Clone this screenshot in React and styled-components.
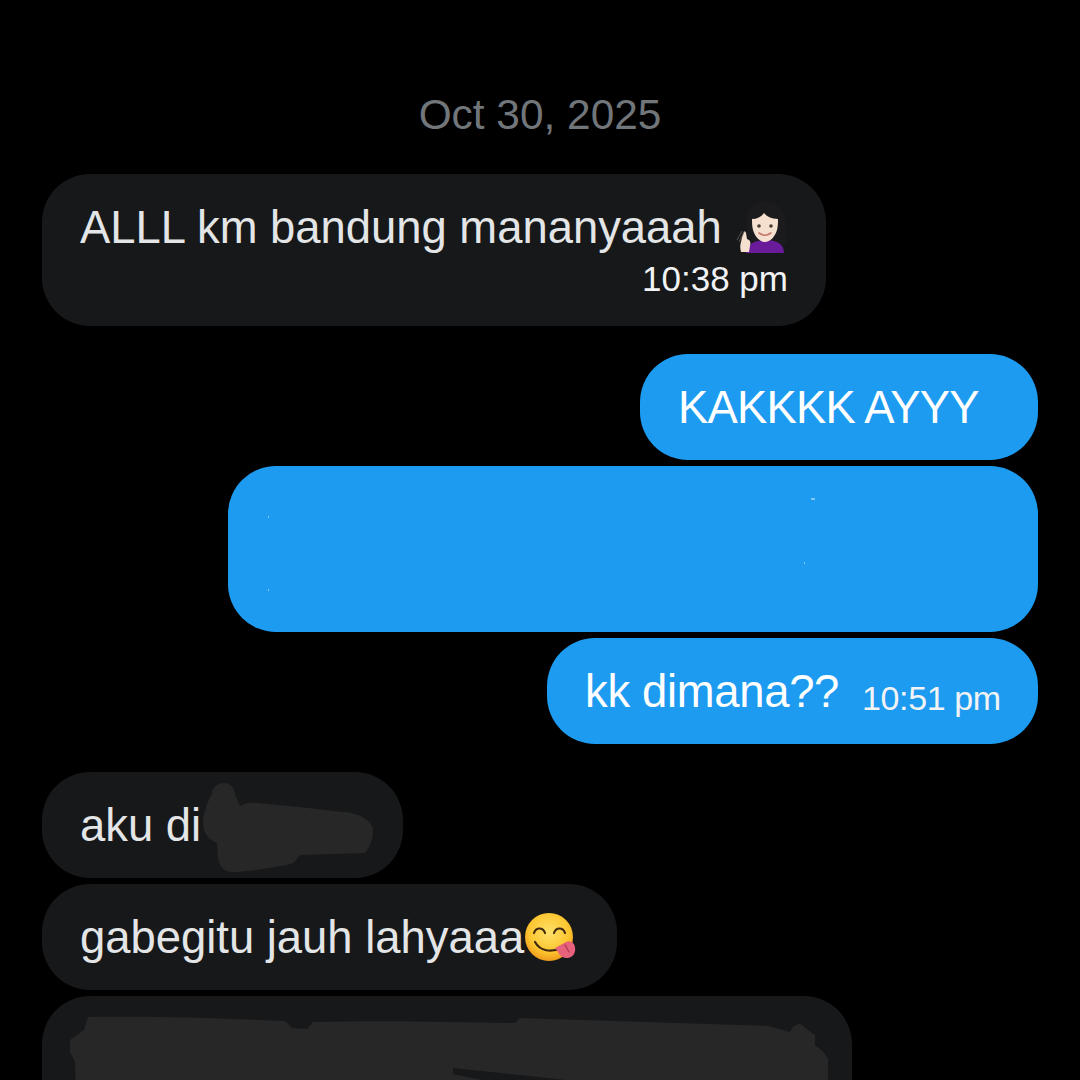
import React from "react";
import styled, { createGlobalStyle } from "styled-components";

const Global = createGlobalStyle`
  html, body { margin: 0; padding: 0; background: #000; }
  #root { width: 1080px; height: 1080px; overflow: hidden; }
`;

const Page = styled.main`
  width: 1080px;
  height: 1080px;
  box-sizing: border-box;
  padding: 0 42px;
  background: #000;
  overflow: hidden;
  display: flex;
  flex-direction: column;
  font-family: "Liberation Sans", Arial, sans-serif;
`;

const DateLabel = styled.div`
  height: 174px;
  box-sizing: border-box;
  padding-top: 91px;
  text-align: center;
  font-size: 42.4px;
  line-height: 48px;
  color: #71767b;
  flex: none;
`;

const Group = styled.section`
  display: flex;
  flex-direction: column;
  align-items: ${(p) => (p.$mine ? "flex-end" : "flex-start")};
  gap: 6px;
  margin-bottom: 28px;
  flex: none;
`;

const Bubble = styled.div`
  position: relative;
  box-sizing: border-box;
  width: ${(p) => p.$w}px;
  height: ${(p) => p.$h}px;
  padding: 25px 38px 0;
  border-radius: 48px;
  background: ${(p) => (p.$mine ? "#1d9bf0" : "#16181a")};
  color: ${(p) => (p.$mine ? "#ffffff" : "#e3e5e6")};
  font-size: 45.4px;
  line-height: 58px;
  white-space: nowrap;
  flex: none;
`;

const Line = styled.div`
  display: flex;
  align-items: center;
  height: 58px;
  letter-spacing: ${(p) => p.$ls || 0}px;
`;

const Stamp = styled.div`
  font-size: 35px;
  line-height: 40px;
  color: #f2f3f4;
  text-align: right;
  margin-top: 2px;
`;

const InlineStamp = styled.span`
  font-size: 34px;
  letter-spacing: -0.4px;
  color: #f2f3f4;
  margin-left: 23px;
  position: relative;
  top: 6px;
`;

const Smudge = styled.svg`
  position: absolute;
  left: 0;
  top: 0;
  pointer-events: none;
`;

const Emoji = styled.svg`
  flex: none;
  margin-left: ${(p) => p.$ml || 0}px;
  margin-right: -20px;
`;

const Woman = () => (
  <Emoji width="60" height="60" viewBox="0 0 60 60" $ml={10}>
    <path d="M14 26C13 11 22 4 34 4c12 0 21 8 20 24-.3 6 0 12 1 18H13c1-6 1.500-13 1-20z" fill="#1b1a1c" />
    <path d="M14 55c1-8 8-13 20-13s18 5 18 13z" fill="#6a1b9a" />
    <path d="M20 21c5 0 9-2 12-6 2 3 8 6 14 6 0 4 0 7-1 11-2 7-7 12-12 12s-10-5-12-12c-1-4-1-7-1-11z" fill="#f5dfcf" />
    <circle cx="27" cy="28" r="1.800" fill="#4a3a33" />
    <circle cx="39" cy="28" r="1.800" fill="#4a3a33" />
    <path d="M27 35c4 3 8 3 12 0" stroke="#c8786b" strokeWidth="1.600" fill="none" strokeLinecap="round" />
    <path d="M9 54c-1-4-1-7 0-10l2-9c.3-2 3-2 3 0l1 6c3 1 4 3 3 7l-1 6z" fill="#f5dfcf" />
    <path d="M5 42l5-9M7 44l5-10" stroke="#55504e" strokeWidth="1" />
  </Emoji>
);

const Yum = () => (
  <Emoji width="52" height="52" viewBox="0 0 52 52">
    <defs>
      <radialGradient id="face" cx="50%" cy="40%" r="60%">
        <stop offset="0" stopColor="#ffe169" />
        <stop offset="0.7" stopColor="#fcc52f" />
        <stop offset="1" stopColor="#ef9a1c" />
      </radialGradient>
    </defs>
    <circle cx="25" cy="25" r="24" fill="url(#face)" />
    <path d="M10 21c2-6 9-6 11 0M30 21c2-6 9-6 11 0" stroke="#42280f" strokeWidth="2.200" fill="none" strokeLinecap="round" />
    <path d="M11 30c5 9 16 11 26 6" stroke="#42280f" strokeWidth="2.200" fill="none" strokeLinecap="round" />
    <path d="M31 36l11-6c4-2 8 0 9 5 1 6-2 10-7 11-5 0-8-2-10-6z" fill="#e8627b" />
    <path d="M41 33l4 7" stroke="#b63c57" strokeWidth="1.500" strokeLinecap="round" />
  </Emoji>
);

export default function App() {
  return (
    <Page>
      <Global />
      <DateLabel>Oct 30, 2025</DateLabel>

      <Group>
        <Bubble $w={784} $h={152}>
          <Line>
            ALLL km bandung mananyaaah
            <Woman />
          </Line>
          <Stamp>10:38 pm</Stamp>
        </Bubble>
      </Group>

      <Group $mine>
        <Bubble $mine $w={398} $h={106}>
          <Line $ls={-0.8}>KAKKKK AYYY</Line>
        </Bubble>
        <Bubble $mine $w={810} $h={166}>
          <Smudge width="810" height="166" viewBox="0 0 810 166">
            <path d="M583 33h4M40 51h1M576 97h1M40 124h1" stroke="#dff1fd" strokeWidth="1" />
          </Smudge>
        </Bubble>
        <Bubble $mine $w={491} $h={106}>
          <Line $ls={-0.3}>
            kk dimana??
            <InlineStamp>10:51 pm</InlineStamp>
          </Line>
        </Bubble>
      </Group>

      <Group>
        <Bubble $w={361} $h={106}>
          <Line>aku di</Line>
          <Smudge width="361" height="106" viewBox="0 0 361 106">
            <path
              d="M170 22c0-7 6-11 12-11s11 5 11 12l5 11c5-3 10-4 17-3l43 4 42 5c14 0 31 8 31 18 0 10-3 17-8 23l-65 2c-2 3-4 5-7 8-10 4-50 9-61 9-8 0-13-6-14-14l-1-15c-8-3-14-10-14-20 0-10 4-20 9-29z"
              fill="#272727"
            />
          </Smudge>
        </Bubble>
        <Bubble $w={575} $h={106}>
          <Line>
            gabegitu jauh lahyaaa
            <Yum />
          </Line>
        </Bubble>
        <Bubble $w={810} $h={200}>
          <Smudge width="810" height="200" viewBox="0 0 810 200">
            <path
              d="M46 21c60-1 130 1 197 4l7 7 15 1 6-7c70-2 140 0 202 1l5-5 249 8 21 6 3-5c4-4 9-4 11 0l11 8v11c8 3 11 10 13 13v139H38l-5-136-5-10V44l14-10z"
              fill="#272727"
            />
            <path d="M411 72l113 12h-84l-29-6z" fill="#16181a" />
          </Smudge>
        </Bubble>
      </Group>
    </Page>
  );
}
